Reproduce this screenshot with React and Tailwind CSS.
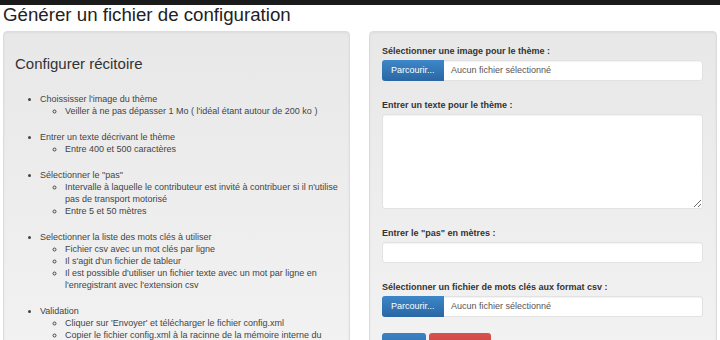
import React from 'react';

const steps = [
  { title: "Choississer l'image du thème", sub: ["Veiller à ne pas dépasser 1 Mo ( l'idéal étant autour de 200 ko )"] },
  { title: 'Entrer un texte décrivant le thème', sub: ['Entre 400 et 500 caractères'] },
  {
    title: 'Sélectionner le "pas"',
    sub: [
      "Intervalle à laquelle le contributeur est invité à contribuer si il n'utilise pas de transport motorisé",
      'Entre 5 et 50 mètres',
    ],
  },
  {
    title: 'Selectionner la liste des mots clés à utiliser',
    sub: [
      'Fichier csv avec un mot clés par ligne',
      "Il s'agit d'un fichier de tableur",
      "Il est possible d'utiliser un fichier texte avec un mot par ligne en l'enregistrant avec l'extension csv",
    ],
  },
  {
    title: 'Validation',
    sub: [
      "Cliquer sur 'Envoyer' et télécharger le fichier config.xml",
      'Copier le fichier config.xml à la racinne de la mémoire interne du téléphone',
    ],
  },
];

const FileInput = () => (
  <div className="flex h-[21px] w-full rounded-[3px] border border-[#e2e2e2] bg-white shadow-[inset_0_1px_1px_rgba(0,0,0,0.05)]">
    <span className="flex items-center rounded-l-[3px] bg-gradient-to-b from-[#3d87c9] to-[#2a67a3] px-[9px] text-white w-[62px] -my-px -ml-px">
      Parcourir...
    </span>
    <span className="flex items-center pl-[7px] text-[#555]">Aucun fichier sélectionné</span>
  </div>
);

const Label = ({ children }) => (
  <label className="block h-[11px] leading-[14px] font-bold text-[#333] mb-[5px]">{children}</label>
);

export default function App() {
  return (
    <div className="h-[340px] overflow-hidden bg-white text-[9px] text-[#333] font-['Liberation_Sans',Arial,sans-serif]">
      <div className="h-[5px] bg-[#1b1b1b]" />
      <h1 className="h-[20px] pl-[3px] text-[18.7px] leading-[20px] text-[#222] mb-[6px]">
        Générer un fichier de configuration
      </h1>
      <div className="flex gap-[19px] pl-[3px]">
        <div className="w-[347px] h-[420px] shrink-0 rounded-[4px] border border-[#dcdcdc] bg-gradient-to-b from-[#e8e8e8] to-[#f5f5f5] pl-[11px] pr-[6px] shadow-[inset_0_1px_3px_rgba(0,0,0,0.05)]">
          <h3 className="mt-[24px] text-[15px] leading-[16.5px] text-[#333]">Configurer récitoire</h3>
          <ul className="mt-[20px] list-disc pl-[25px] leading-[12px] text-[#444]">
            {steps.map(step => (
              <li key={step.title} className="mb-[14px]">
                {step.title}
                <ul className="list-[circle] pl-[25px]">
                  {step.sub.map(s => (
                    <li key={s}>{s}</li>
                  ))}
                </ul>
              </li>
            ))}
          </ul>
        </div>
        <div className="w-[348px] h-[420px] shrink-0 rounded-[4px] border border-[#dcdcdc] bg-gradient-to-b from-[#e8e8e8] to-[#f5f5f5] pl-[12px] pr-[13px] pt-[12px] shadow-[inset_0_1px_3px_rgba(0,0,0,0.05)]">
          <div className="mb-[17px]">
            <Label>Sélectionner une image pour le thème :</Label>
            <FileInput />
          </div>
          <div className="mb-[17px]">
            <Label>Entrer un texte pour le thème :</Label>
            <textarea className="block h-[95px] w-full rounded-[3px] border border-[#e2e2e2] bg-white shadow-[inset_0_1px_1px_rgba(0,0,0,0.05)]" />
          </div>
          <div className="mb-[17px]">
            <Label>Entrer le "pas" en mètres :</Label>
            <input type="text" className="block h-[21px] w-full rounded-[3px] border border-[#e2e2e2] bg-white shadow-[inset_0_1px_1px_rgba(0,0,0,0.05)]" />
          </div>
          <div className="mb-[16px]">
            <Label>Sélectionner un fichier de mots clés aux format csv :</Label>
            <FileInput />
          </div>
          <div className="flex gap-[3px]">
            <button className="h-[28px] w-[44px] rounded-[3px] bg-gradient-to-b from-[#3a82c4] to-[#2a67a3] text-white">Envoyer</button>
            <button className="h-[28px] w-[62px] rounded-[3px] bg-gradient-to-b from-[#d9534f] to-[#c12e2a] text-white">Annuler</button>
          </div>
        </div>
      </div>
    </div>
  );
}
